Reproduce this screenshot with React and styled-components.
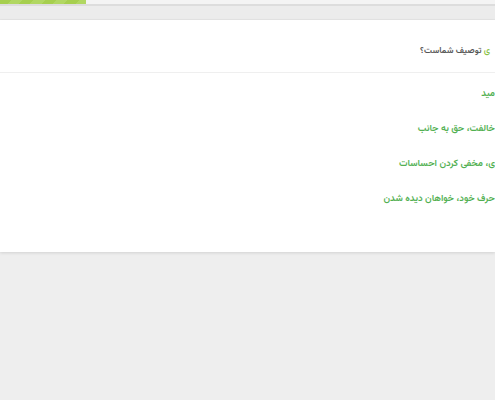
import React from "react";
import styled, { createGlobalStyle } from "styled-components";

const Global = createGlobalStyle`
  html, body { margin: 0; padding: 0; background: #eeeeee; }
  body { font-family: "Vazirmatn", "Noto Sans Arabic", "DejaVu Sans", sans-serif; overflow: hidden; }
`;

const Page = styled.div`
  width: 495px;
  height: 400px;
  display: flex;
  flex-direction: column;
  overflow: hidden;
  background: #eeeeee;
`;

const ProgressTrack = styled.div`
  height: 4px;
  background: #f4f4f4;
  display: flex;
`;

const ProgressFill = styled.div`
  height: 100%;
  background: repeating-linear-gradient(
    135deg,
    #a6cf4e 0 8px,
    #b1d762 8px 16px
  );
`;

const Band = styled.div`
  height: 13px;
  border-top: 2px solid #dddddd;
  border-bottom: 1px solid #e6e6e6;
  background: #ececec;
`;

const Card = styled.section`
  background: #ffffff;
  height: 232px;
  box-shadow: 0 1px 3px rgba(0, 0, 0, 0.12);
  direction: rtl;
  display: flex;
  flex-direction: column;
`;

const Header = styled.div`
  height: 53px;
  border-bottom: 1px solid #efefef;
  display: flex;
  align-items: center;
  padding-right: 5px;
  padding-top: 9px;
  box-sizing: border-box;
`;

const Title = styled.h2`
  margin: 0;
  font-size: 8.8px;
  font-weight: 600;
  color: #555555;
  white-space: nowrap;
`;

const Accent = styled.span`
  color: #8bc34a;
`;

const Options = styled.ul`
  list-style: none;
  margin: 0;
  padding: 14px 0 0 0;
  display: flex;
  flex-direction: column;
  gap: 21px;
`;

const Option = styled.li`
  font-size: 9.5px;
  font-weight: 600;
  line-height: 14px;
  color: #52b052;
  white-space: nowrap;
`;

export default function App() {
  return (
    <Page>
      <Global />
      <ProgressTrack>
        <ProgressFill style={{ width: "86px" }} />
      </ProgressTrack>
      <Band />
      <Card>
        <Header>
          <Title>
            <Accent>ی</Accent> توصیف شماست؟
          </Title>
        </Header>
        <Options>
          <Option>مید</Option>
          <Option>خالفت، حق به جانب</Option>
          <Option>ی، مخفی کردن احساسات</Option>
          <Option>حرف خود، خواهان دیده شدن</Option>
        </Options>
      </Card>
    </Page>
  );
}
